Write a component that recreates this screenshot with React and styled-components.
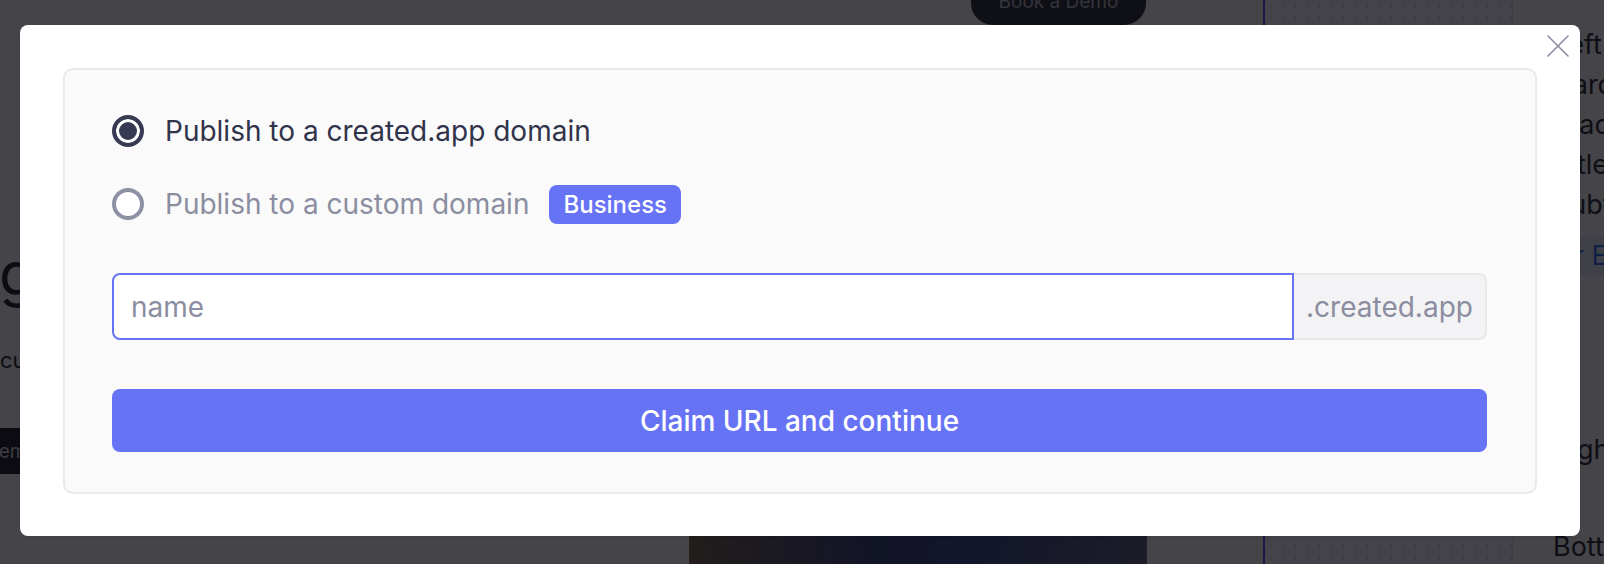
import React from "react";
import styled, { createGlobalStyle } from "styled-components";

const GlobalStyle = createGlobalStyle`
  html, body {
    margin: 0;
    padding: 0;
    height: 564px;
    overflow: hidden;
    background: #ffffff;
    font-family: "Inter", "Noto Sans", sans-serif;
  }
  * {
    box-sizing: border-box;
  }
`;

function CloseIcon() {
  return (
    <svg width="22" height="22" viewBox="0 0 22 22" fill="none">
      <path d="M1 1L21 21M21 1L1 21" stroke="#8b8ca0" strokeWidth="1.6" strokeLinecap="round" />
    </svg>
  );
}

function App() {
  return (
    <>
      <GlobalStyle />
      <Page>
        <MainArea>
          <TopBar>
            <DemoPill>Book a Demo</DemoPill>
          </TopBar>
          <Hero>
            <HeroTitle>go live</HeroTitle>
            <HeroText>custom domains for every project</HeroText>
            <HeroButton>Demo</HeroButton>
          </Hero>
          <HeroImage />
        </MainArea>
        <Divider />
        <Canvas />
        <SidePanel>
          <SideItem>Left</SideItem>
          <SideItem>Card</SideItem>
          <SideItem>Stack</SideItem>
          <SideItem>Title</SideItem>
          <SideItem>Subtitle</SideItem>
          <SideItemActive>Or Edit</SideItemActive>
          <SideItem $gap={154}>Right</SideItem>
          <SideItem $gap={57}>Bottom</SideItem>
        </SidePanel>
      </Page>

      <Overlay>
        <Modal>
          <CloseButton aria-label="Close">
            <CloseIcon />
          </CloseButton>
          <Card>
            <OptionRow>
              <Radio $checked />
              <OptionLabel $active>Publish to a created.app domain</OptionLabel>
            </OptionRow>
            <OptionRow $gap={33}>
              <Radio />
              <OptionLabel>Publish to a custom domain</OptionLabel>
              <Badge>Business</Badge>
            </OptionRow>
            <UrlField>
              <NameInput placeholder="name" />
              <Suffix>.created.app</Suffix>
            </UrlField>
            <ClaimButton>Claim URL and continue</ClaimButton>
          </Card>
        </Modal>
      </Overlay>
    </>
  );
}

/* page behind the dialog */

const Page = styled.div`
  display: grid;
  grid-template-columns: 1263px 2px 248px 1fr;
  height: 564px;
  overflow: hidden;
  background: #ffffff;
`;

const MainArea = styled.div`
  display: flex;
  flex-direction: column;
  overflow: hidden;
`;

const TopBar = styled.div`
  height: 25px;
  display: flex;
  padding-left: 971px;
`;

const DemoPill = styled.div`
  width: 175px;
  height: 45px;
  margin-top: -20px;
  border-radius: 0 0 22px 22px;
  background: #1a1a24;
  color: #b8b8c2;
  font-size: 19px;
  display: flex;
  align-items: flex-end;
  justify-content: center;
  padding-bottom: 12px;
`;

const Hero = styled.div`
  display: flex;
  flex-direction: column;
  align-items: flex-start;
  margin-top: 212px;
  color: #111114;
`;

const HeroTitle = styled.h1`
  margin: 0;
  font-size: 60px;
  line-height: 72px;
  font-weight: 400;
  margin-left: -1px;
`;

const HeroText = styled.p`
  margin: 35px 0 0;
  font-size: 22px;
  line-height: 32px;
`;

const HeroButton = styled.div`
  margin: 52px 0 0 -15px;
  height: 46px;
  padding: 0 24px 0 0;
  background: #0a0a0e;
  color: #d8d8dc;
  font-size: 19px;
  display: flex;
  align-items: center;
`;

const HeroImage = styled.div`
  margin: auto 0 0 689px;
  width: 458px;
  height: 28px;
  background: linear-gradient(90deg, #6e5a3a 0%, #2a3170 40%, #2b3580 60%, #50566e 100%);
`;

const Divider = styled.div`
  background: #4f46e5;
`;

const Canvas = styled.div`
  background-color: #fbfbfd;
  background-image: radial-gradient(circle, #c9cad6 1px, transparent 1.2px);
  background-size: 12px 12px;
  border-right: 1px solid #e6e6ea;
`;

const SidePanel = styled.div`
  display: flex;
  flex-direction: column;
  padding-top: 25px;
  overflow: hidden;
  white-space: nowrap;
`;

const SideItem = styled.div`
  height: 40px;
  line-height: 40px;
  padding-left: 40px;
  margin-top: ${(p) => (p.$gap ? `${p.$gap}px` : "0")};
  font-size: 27px;
  color: #16161c;
`;

const SideItemActive = styled(SideItem)`
  margin-top: 11px;
  background: #eef2fb;
  color: #2563eb;
`;

/* dialog */

const Overlay = styled.div`
  position: fixed;
  inset: 0;
  background: rgba(12, 12, 18, 0.77);
  padding: 25px 0 0 20px;
`;

const Modal = styled.div`
  position: relative;
  width: 1560px;
  padding: 43px 43px 42px;
  background: #ffffff;
  border-radius: 8px;
  box-shadow: 0 1px 2px rgba(0, 0, 0, 0.08);
`;

const CloseButton = styled.button`
  position: absolute;
  top: 10px;
  right: 11px;
  padding: 0;
  border: 0;
  background: none;
  display: flex;
  cursor: pointer;
`;

const Card = styled.div`
  display: flex;
  flex-direction: column;
  padding: 41px 48px 40px 47px;
  background: #fafafa;
  border: 2px solid #e9e9eb;
  border-radius: 10px;
`;

const OptionRow = styled.label`
  display: flex;
  align-items: center;
  height: 40px;
  margin-top: ${(p) => (p.$gap ? `${p.$gap}px` : "0")};
  cursor: pointer;
`;

const Radio = styled.span`
  flex: none;
  width: 32px;
  height: 32px;
  border-radius: 50%;
  border: 4px solid ${(p) => (p.$checked ? "#373a52" : "#8e90a3")};
  background: ${(p) => (p.$checked ? "#373a52" : "#ffffff")};
  box-shadow: ${(p) => (p.$checked ? "inset 0 0 0 3px #ffffff" : "none")};
  margin-right: 21px;
`;

const OptionLabel = styled.span`
  font-size: 28px;
  line-height: 40px;
  color: ${(p) => (p.$active ? "#30334a" : "#8b8da0")};
`;

const Badge = styled.span`
  margin-left: 20px;
  height: 39px;
  padding: 0 14px;
  display: inline-flex;
  align-items: center;
  border-radius: 8px;
  background: #6673f5;
  color: #ffffff;
  font-size: 24px;
  font-weight: 500;
`;

const UrlField = styled.div`
  display: flex;
  height: 67px;
  margin-top: 49px;
`;

const NameInput = styled.input`
  flex: 1;
  min-width: 0;
  height: 100%;
  padding: 0 17px;
  border: 2px solid #6673f5;
  border-radius: 8px 0 0 8px;
  background: #ffffff;
  font-family: inherit;
  font-size: 28px;
  color: #30334a;
  outline: none;

  &::placeholder {
    color: #8b8da0;
  }
`;

const Suffix = styled.span`
  flex: none;
  width: 193px;
  display: flex;
  align-items: center;
  justify-content: center;
  background: #f3f3f5;
  border: 2px solid #e8e8eb;
  border-left: 0;
  border-radius: 0 8px 8px 0;
  font-size: 28px;
  color: #8b8da0;
`;

const ClaimButton = styled.button`
  margin-top: 49px;
  height: 63px;
  border: 0;
  border-radius: 8px;
  background: #6673f5;
  color: #ffffff;
  font-family: inherit;
  font-size: 28px;
  font-weight: 500;
  cursor: pointer;
`;

export default App;
